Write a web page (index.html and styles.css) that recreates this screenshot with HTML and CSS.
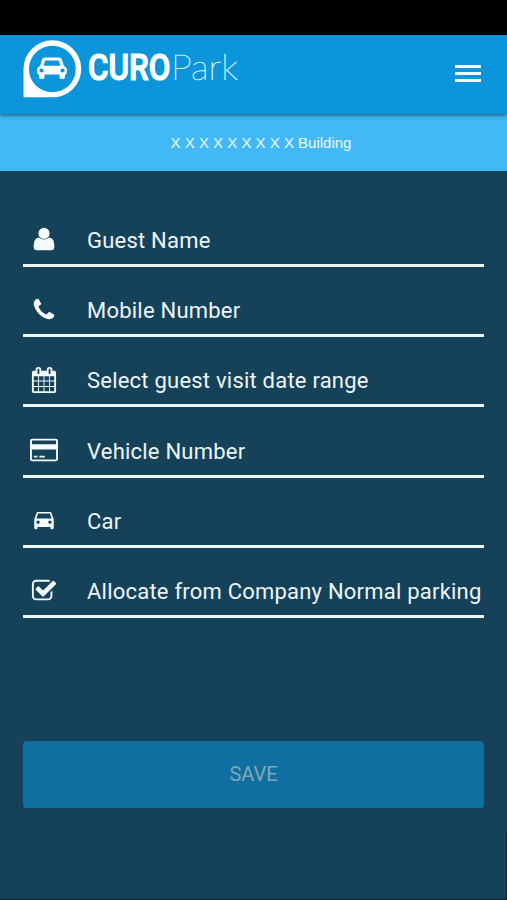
FILE: index.html
```
<!DOCTYPE html>
<html lang="en">
<head>
    <meta charset="UTF-8">
    <meta name="viewport" content="width=device-width, initial-scale=1.0">
    <title>CUROPark</title>
    <link rel="stylesheet" href="styles.css">
</head>
<body>
    <div class="status-bar"></div>
    <header class="header">
        <svg class="logo" viewBox="0 0 220 60" width="220" height="60">
            <path fill="#fff" fill-rule="evenodd" d="M.5 57.300V28.800A28.900 28.500 0 1 1 29.400 57.300zM6 29a23.400 23.200 0 1 0 46.800 0a23.400 23.200 0 1 0-46.800 0z"/>
            <path fill="#fff" fill-rule="evenodd" d="M22 17.500h14q2.200 0 2.900 2l2 6.500q2.800 1 2.800 3.500V33q0 1.600-1.500 1.600H15.800q-1.500 0-1.500-1.600v-3.500q0-2.500 2.800-3.500l2-6.500q.7-2 2.900-2zM22.200 20.400l-1.600 5.400h16.800l-1.600-5.400z"/>
            <circle cx="18.500" cy="30.500" r="4.300" fill="#fff"/>
            <circle cx="39.500" cy="30.500" r="4.300" fill="#fff"/>
            <rect x="16" y="33" width="5.500" height="5.900" rx="2" fill="#fff"/>
            <rect x="36.500" y="33" width="5.500" height="5.900" rx="2" fill="#fff"/>
            <circle cx="18.500" cy="30.500" r="2.100" fill="#0c95da"/>
            <circle cx="39.500" cy="30.500" r="2.100" fill="#0c95da"/>
            <text class="logo-bold" x="65" y="39.800" textLength="82.500" lengthAdjust="spacingAndGlyphs">CURO</text>
            <text class="logo-thin" x="148" y="40" textLength="67" lengthAdjust="spacingAndGlyphs">Park</text>
        </svg>
        <div class="menu">
            <span></span>
            <span></span>
            <span></span>
        </div>
    </header>
    <div class="building">X X X X X X X X X Building</div>
    <form class="guest-form">
        <div class="field">
            <svg class="icon" viewBox="0 0 30 26">
                <path d="M10 11.500q-5.300.6-5.300 8v1.300q0 3.500 3.300 3.500h14q3.300 0 3.300-3.500v-1.300q0-7.400-5.300-8-2.200 2.100-5 2.100t-5-2.100z"/>
                <circle cx="15" cy="7.400" r="5.600"/>
            </svg>
            <span class="label">Guest Name</span>
        </div>
        <div class="field">
            <svg class="icon" viewBox="-138 0 2068 1792">
                <path d="M1600 1240q0 27-10 70.500t-21 68.500q-21 50-122 106-94 51-186 51-27 0-53-3.500t-57.500-12.500-47-14.500-55.500-20.500-49-18q-98-35-175-83-127-79-264-216t-216-264q-48-77-83-175-3-9-18-49t-20.500-55.500-14.500-47-12.500-57.500-3.500-53q0-92 51-186 56-101 106-122 25-11 68.500-21t70.500-10q14 0 21 3 18 6 53 76 11 19 30 54t35 63.500 31 53.500q3 4 17.500 25t21.500 35.500 7 28.500q0 20-28.500 50t-62 55-62 53-28.500 46q0 9 5 22.500t8.500 20.500 14 24 11.500 19q76 137 174 235t235 174q2 1 19 11.500t24 14 20.500 8.500 22.500 5q18 0 46-28.500t53-62 55-62 50-28.500q14 0 28.500 7t35.500 21.500 25 17.500q25 15 53.500 31t63.500 35 54 30q70 35 76 53 3 7 3 21z"/>
            </svg>
            <span class="label">Mobile Number</span>
        </div>
        <div class="field">
            <svg class="icon" viewBox="-138 0 2068 1792">
                <path d="M192 1664h288v-288h-288v288zm352 0h320v-288h-320v288zm-352-352h288v-320h-288v320zm352 0h320v-320h-320v320zm-352-384h288v-288h-288v288zm736 736h320v-288h-320v288zm-384-736h320v-288h-320v288zm768 736h288v-288h-288v288zm-384-352h320v-320h-320v320zm-352-864v-288q0-13-9.500-22.500t-22.500-9.500h-64q-13 0-22.500 9.500t-9.500 22.500v288q0 13 9.500 22.500t22.500 9.500h64q13 0 22.500-9.500t9.500-22.500zm736 864h288v-320h-288v320zm-384-384h320v-288h-320v288zm384 0h288v-288h-288v288zm32-480v-288q0-13-9.500-22.500t-22.500-9.500h-64q-13 0-22.500 9.500t-9.500 22.500v288q0 13 9.500 22.500t22.500 9.500h64q13 0 22.500-9.500t9.500-22.500zm384-64v1280q0 52-38 90t-90 38h-1408q-52 0-90-38t-38-90v-1280q0-52 38-90t90-38h128v-96q0-66 47-113t113-47h64q66 0 113 47t47 113v96h384v-96q0-66 47-113t113-47h64q66 0 113 47t47 113v96h128q52 0 90 38t38 90z"/>
            </svg>
            <span class="label">Select guest visit date range</span>
        </div>
        <div class="field">
            <svg class="icon" viewBox="0 0 30 26">
                <path fill-rule="evenodd" d="M3.300 1.700h23.400q2.300 0 2.300 2.300v18q0 2.300-2.300 2.300H3.300Q1 24.300 1 22V4q0-2.300 2.300-2.300zM3.500 3.500q-.6 0-.6.600V7.200h24.200V4.100q0-.6-.6-.6zM2.900 12.500v9.400q0 .6.600.600h23q.6 0 .6-.6v-9.400zM4.800 18.700h3.700v1.900H4.800zM10.400 18.700h5.500v1.900h-5.500z"/>
            </svg>
            <span class="label">Vehicle Number</span>
        </div>
        <div class="field">
            <svg class="icon" viewBox="-1.850 .5 27.700 24">
                <path d="M18.920 6.010C18.720 5.420 18.160 5 17.500 5h-11c-.66 0-1.210.42-1.420 1.010L3 12v8c0 .55.45 1 1 1h1c.55 0 1-.45 1-1v-1h12v1c0 .55.45 1 1 1h1c.55 0 1-.45 1-1v-8l-2.080-5.990zM6.500 16c-.83 0-1.500-.67-1.500-1.500S5.670 13 6.500 13s1.500.67 1.500 1.500S7.330 16 6.500 16zm11 0c-.83 0-1.500-.67-1.500-1.500s.67-1.500 1.500-1.500 1.500.67 1.500 1.500-.67 1.500-1.500 1.500zM5 11l1.500-4.500h11L19 11H5z"/>
            </svg>
            <span class="label">Car</span>
        </div>
        <div class="field">
            <svg class="icon" viewBox="-138 0 2068 1792">
                <path d="M1472 930v318q0 119-84.500 203.500t-203.500 84.500h-832q-119 0-203.500-84.500t-84.500-203.500v-832q0-119 84.500-203.500t203.500-84.500h832q63 0 117 25 15 7 18 23 3 17-9 29l-49 49q-10 10-23 10-3 0-9-2-23-6-45-6h-832q-66 0-113 47t-47 113v832q0 66 47 113t113 47h832q66 0 113-47t47-113v-254q0-13 9-22l64-64q10-10 23-10 6 0 12 3 20 8 20 29zm231-489l-814 814q-24 24-57 24t-57-24l-430-430q-24-24-24-57t24-57l110-110q24-24 57-24t57 24l263 263 647-647q24-24 57-24t57 24l110 110q24 24 24 57t-24 57z"/>
            </svg>
            <span class="label">Allocate from Company Normal parking</span>
        </div>
        <button type="submit" class="save" disabled>SAVE</button>
    </form>
    <div class="scroll-thumb"></div>
</body>
</html>
```
FILE: styles.css
```
* {
    margin: 0;
    padding: 0;
    box-sizing: border-box;
    font-family: Roboto, sans-serif;
}
body {
    height: 900px;
    overflow: hidden;
    position: relative;
    background: #164259;
    border-bottom: 1px solid #0a2536;
}
.status-bar {
    height: 35px;
    background: #000;
}
.header {
    height: 79px;
    padding: 4px 26px 0 23px;
    display: flex;
    justify-content: space-between;
    position: relative;
    background: #0c95da;
    box-shadow: 0 1px 4px rgba(0, 0, 0, 0.6);
}
.logo {
    margin-top: 1px;
}
.logo-bold {
    font-size: 36px;
    font-weight: 500;
    fill: #fff;
    stroke: #fff;
    stroke-width: 1.200px;
    stroke-linejoin: round;
}
.logo-thin {
    font-family: Lato, sans-serif;
    font-size: 36px;
    font-weight: 100;
    fill: #d8f0ff;
    stroke: #d8f0ff;
    stroke-width: 0.500px;
}
.menu {
    width: 26px;
    margin-top: 26px;
    display: flex;
    flex-direction: column;
    gap: 4px;
}
.menu span {
    height: 3px;
    background: #f2faff;
}
.building {
    height: 57px;
    padding-left: 15px;
    text-align: center;
    font-family: "Liberation Sans", sans-serif;
    font-size: 15px;
    line-height: 58px;
    color: #eefaff;
    background: #42b8f6;
}
.guest-form {
    padding: 25.500px 23px 0;
}
.field {
    height: 70.250px;
    padding: 0 0 4px 6px;
    display: flex;
    align-items: flex-end;
    border-bottom: 3px solid #eef6fa;
}
.icon {
    width: 30px;
    height: 26px;
    margin-bottom: 7.500px;
    flex-shrink: 0;
    fill: #f4fafd;
}
.label {
    margin-left: 28px;
    font-size: 22px;
    line-height: 38px;
    letter-spacing: 0.220px;
    white-space: nowrap;
    color: #eef6fa;
}
.save {
    display: block;
    width: 100%;
    height: 67px;
    margin-top: 123px;
    padding-bottom: 2px;
    border: none;
    border-radius: 4px;
    font-size: 20px;
    color: #85a7b9;
    background: #0e6fa0;
}
.scroll-thumb {
    position: absolute;
    right: 0;
    bottom: 0;
    width: 1px;
    height: 67px;
    background: #0a2536;
}
```
